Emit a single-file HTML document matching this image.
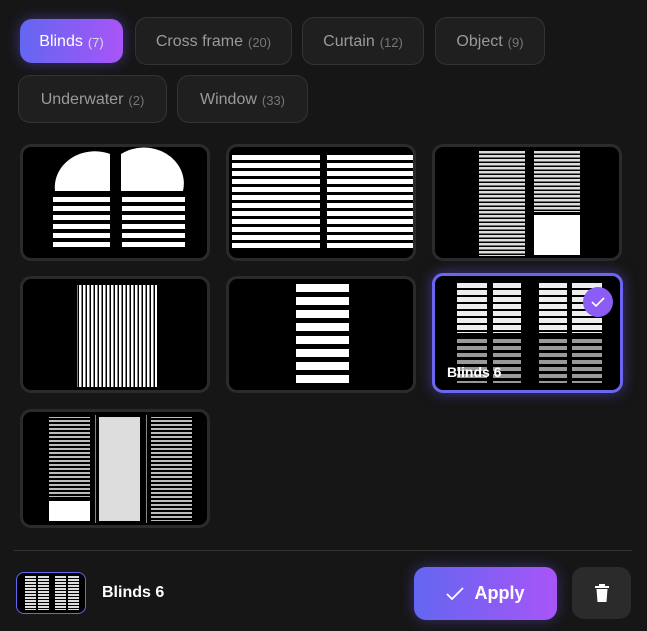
<!DOCTYPE html>
<html><head><style>
*{box-sizing:border-box;margin:0;padding:0}
body{width:647px;height:631px;background:#161616;font-family:"Liberation Sans",sans-serif;position:relative;overflow:hidden}
.chip{position:absolute;height:48px;border:1px solid #333;border-radius:12px;background:#1f1f1f;color:#9a9a9a;font-size:16px;display:flex;align-items:center;justify-content:center;padding-top:2px}
.chip small{font-size:13px;color:#777;margin-left:5px}
.chip.on{background:linear-gradient(90deg,#6366f1,#a855f7);color:#fff;border:none;box-shadow:0 0 14px rgba(110,90,250,.45)}
.chip.on small{color:#ddd}
.card{position:absolute;width:190px;height:117px;background:#000;border:3px solid #2b2b2b;border-radius:11px;overflow:hidden}
.card svg{position:absolute;left:0;top:0}
.sel{border-color:#6a66f0;box-shadow:0 0 14px rgba(100,90,240,.5)}
</style></head><body>
<div class="chip on" style="left:20px;top:19px;width:103px;height:44px">Blinds<small>(7)</small></div>
<div class="chip" style="left:135px;top:17px;width:157px">Cross frame<small>(20)</small></div>
<div class="chip" style="left:302px;top:17px;width:122px">Curtain<small>(12)</small></div>
<div class="chip" style="left:435px;top:17px;width:110px">Object<small>(9)</small></div>
<div class="chip" style="left:18px;top:75px;width:149px">Underwater<small>(2)</small></div>
<div class="chip" style="left:177px;top:75px;width:131px">Window<small>(33)</small></div>

<div class="card" style="left:20px;top:144px"><svg width="184" height="111">
<path d="M32 44 A40 36 0 0 1 87 7 V44Z M98 44 V7 A40 36 0 0 1 160 44Z" fill="#fff"/>
<g fill="#fff"><rect x="30" y="50" width="57" height="5"/><rect x="30" y="59" width="57" height="5"/><rect x="30" y="68" width="57" height="5"/><rect x="30" y="77" width="57" height="5"/><rect x="30" y="86" width="57" height="5"/><rect x="30" y="95" width="57" height="5"/>
<rect x="99" y="50" width="63" height="5"/><rect x="99" y="59" width="63" height="5"/><rect x="99" y="68" width="63" height="5"/><rect x="99" y="77" width="63" height="5"/><rect x="99" y="86" width="63" height="5"/><rect x="99" y="95" width="63" height="5"/></g></svg></div>

<div class="card" style="left:226px;top:144px"><svg width="184" height="111">
<defs><pattern id="h" width="8" height="8" patternUnits="userSpaceOnUse"><rect width="8" height="5" fill="#fff"/></pattern></defs>
<rect x="3" y="8" width="88" height="94" fill="url(#h)"/><rect x="98" y="8" width="86" height="94" fill="url(#h)"/></svg></div>

<div class="card" style="left:432px;top:144px"><svg width="184" height="111">
<defs><pattern id="h2" width="4" height="4" patternUnits="userSpaceOnUse"><rect width="4" height="2.5" fill="#ddd"/></pattern></defs>
<rect x="44" y="3" width="46" height="106" fill="url(#h2)"/><rect x="99" y="3" width="46" height="62" fill="url(#h2)"/><rect x="99" y="68" width="46" height="40" fill="#fff"/></svg></div>

<div class="card" style="left:20px;top:276px"><svg width="184" height="111">
<defs><pattern id="v" width="4" height="4" patternUnits="userSpaceOnUse"><rect width="2.5" height="4" fill="#fff"/></pattern></defs>
<rect x="54" y="6" width="80" height="102" fill="url(#v)"/></svg></div>

<div class="card" style="left:226px;top:276px"><svg width="184" height="111">
<g fill="#fff"><rect x="67" y="5" width="53" height="8"/><rect x="67" y="18" width="53" height="8"/><rect x="67" y="31" width="53" height="8"/><rect x="67" y="44" width="53" height="8"/><rect x="67" y="57" width="53" height="8"/><rect x="67" y="70" width="53" height="8"/><rect x="67" y="83" width="53" height="8"/><rect x="67" y="96" width="53" height="8"/></g></svg></div>

<div class="card sel" style="left:432px;top:273px;width:191px;height:120px"><svg width="185" height="114">
<defs><pattern id="h3" width="7" height="7" patternUnits="userSpaceOnUse"><rect width="7" height="5" fill="#eee"/></pattern>
<pattern id="h4" width="7" height="7" patternUnits="userSpaceOnUse"><rect width="7" height="4" fill="#999"/></pattern></defs>
<rect x="22" y="5" width="30" height="52" fill="url(#h3)"/><rect x="58" y="5" width="28" height="52" fill="url(#h3)"/><rect x="104" y="5" width="28" height="52" fill="url(#h3)"/><rect x="137" y="5" width="30" height="52" fill="url(#h3)"/>
<rect x="22" y="62" width="30" height="45" fill="url(#h4)"/><rect x="58" y="62" width="28" height="45" fill="url(#h4)"/><rect x="104" y="62" width="28" height="45" fill="url(#h4)"/><rect x="137" y="62" width="30" height="45" fill="url(#h4)"/>
<circle cx="163" cy="26" r="15" fill="#8b5cf6"/><path d="M157 26l4 4 8-8" stroke="#fff" stroke-width="1.6" fill="none"/>
<text x="12" y="101" fill="#fff" font-size="14" font-weight="bold" font-family="Liberation Sans">Blinds 6</text></svg></div>

<div class="card" style="left:20px;top:409px;height:119px"><svg width="184" height="113">
<defs><pattern id="h5" width="4" height="4" patternUnits="userSpaceOnUse"><rect width="4" height="2" fill="#bbb"/></pattern></defs>
<rect x="26" y="5" width="41" height="80" fill="url(#h5)"/><rect x="26" y="89" width="41" height="20" fill="#fff"/>
<rect x="76" y="5" width="41" height="104" fill="#ddd"/><rect x="128" y="5" width="41" height="104" fill="url(#h5)"/>
<rect x="72" y="3" width="1" height="108" fill="#888"/><rect x="123" y="3" width="1" height="108" fill="#888"/></svg></div>

<div style="position:absolute;left:14px;top:550px;width:618px;height:1px;background:#333"></div>
<div style="position:absolute;left:16px;top:572px;width:70px;height:42px;border:1px solid #6366f1;border-radius:8px;background:#000;overflow:hidden"><svg width="68" height="40">
<defs><pattern id="h6" width="3" height="3" patternUnits="userSpaceOnUse"><rect width="3" height="2" fill="#ddd"/></pattern></defs>
<rect x="8" y="3" width="11" height="34" fill="url(#h6)"/><rect x="21" y="3" width="11" height="34" fill="url(#h6)"/><rect x="38" y="3" width="11" height="34" fill="url(#h6)"/><rect x="51" y="3" width="11" height="34" fill="url(#h6)"/></svg></div>
<div style="position:absolute;left:102px;top:584px;color:#fff;font-size:16px;font-weight:bold">Blinds 6</div>
<div style="position:absolute;left:414px;top:567px;width:143px;height:53px;border-radius:12px;background:linear-gradient(90deg,#6366f1,#a855f7);box-shadow:0 0 14px rgba(110,90,250,.4);color:#fff;font-size:18px;font-weight:bold;display:flex;align-items:center;justify-content:center">
<svg width="18" height="14" style="margin-right:10px"><path d="M1 7l5 5 11-11" stroke="#fff" stroke-width="1.8" fill="none"/></svg>Apply</div>
<div style="position:absolute;left:572px;top:567px;width:59px;height:52px;border-radius:12px;background:#2b2b2b;display:flex;align-items:center;justify-content:center">
<svg width="14" height="18"><rect x="0" y="2" width="14" height="2" fill="#fff"/><rect x="4" y="0" width="6" height="2" fill="#fff"/><path d="M1.5 5h11l-1 13h-9z" fill="#fff"/></svg></div>
</body></html>
